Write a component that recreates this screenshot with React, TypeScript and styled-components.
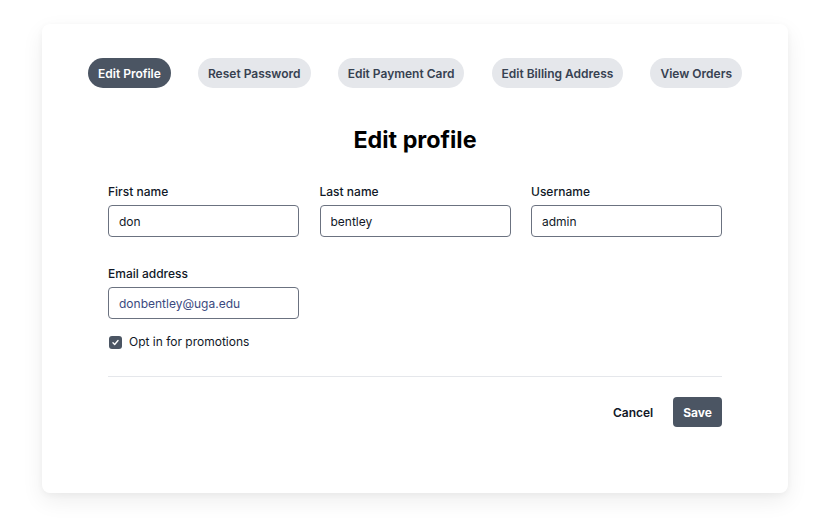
import React, { useState } from 'react';
import styled, { createGlobalStyle } from 'styled-components';

const GlobalStyle = createGlobalStyle`
  body {
    margin: 0;
    background: #ffffff;
    font-family: Inter, "Noto Sans", sans-serif;
    color: #111827;
  }
`;

const tabs = ['Edit Profile', 'Reset Password', 'Edit Payment Card', 'Edit Billing Address', 'View Orders'];

export default function App() {
  const [active, setActive] = useState(0);
  const [optIn, setOptIn] = useState(true);

  return (
    <>
      <GlobalStyle />
      <Page>
        <Card>
          <TabRow>
            {tabs.map((t, i) => (
              <Tab key={t} $active={i === active} onClick={() => setActive(i)}>
                {t}
              </Tab>
            ))}
          </TabRow>
          <Title>Edit profile</Title>
          <Form onSubmit={e => e.preventDefault()}>
            <Grid>
              <Field>
                <Label>First name</Label>
                <Input defaultValue="don" />
              </Field>
              <Field>
                <Label>Last name</Label>
                <Input defaultValue="bentley" />
              </Field>
              <Field>
                <Label>Username</Label>
                <Input defaultValue="admin" />
              </Field>
            </Grid>
            <Grid $second>
              <Field>
                <Label>Email address</Label>
                <Input $autofill defaultValue="donbentley@uga.edu" />
              </Field>
            </Grid>
            <CheckRow onClick={() => setOptIn(!optIn)}>
              <CheckBox $checked={optIn}>
                {optIn && (
                  <svg width="9" height="9" viewBox="0 0 16 16" fill="none">
                    <path d="M3.5 8.5l3 3 6-7" stroke="#fff" strokeWidth="2.4" strokeLinecap="round" strokeLinejoin="round" />
                  </svg>
                )}
              </CheckBox>
              <CheckLabel>Opt in for promotions</CheckLabel>
            </CheckRow>
            <Divider />
            <Actions>
              <CancelBtn type="button">Cancel</CancelBtn>
              <SaveBtn type="submit">Save</SaveBtn>
            </Actions>
          </Form>
        </Card>
      </Page>
    </>
  );
}

const Page = styled.div`
  padding: 24px 44px 25px 42px;
`;
const Card = styled.div`
  width: 746px;
  height: 469px;
  box-sizing: border-box;
  padding: 34px 66px 0;
  background: #fff;
  border-radius: 8px;
  box-shadow: 0 8px 22px rgba(0, 0, 0, 0.07), 0 2px 6px rgba(0, 0, 0, 0.04);
`;
const TabRow = styled.div`
  display: flex;
  justify-content: space-between;
  margin: 0 -20px;
`;
const Tab = styled.button<{ $active: boolean }>`
  height: 30px;
  padding: 0 10px;
  border: none;
  border-radius: 15px;
  font-family: Inter, sans-serif;
  font-size: 12px;
  font-weight: 600;
  cursor: pointer;
  color: ${p => (p.$active ? '#ffffff' : '#374151')};
  background-color: ${p => (p.$active ? '#4b5563' : '#e5e7eb')};
`;
const Title = styled.h1`
  margin: 36px 0 0;
  text-align: center;
  font-size: 23.3px;
  line-height: 32px;
  font-weight: 700;
  color: #000;
`;
const Form = styled.form`
  display: flex;
  flex-direction: column;
  margin-top: 28px;
`;
const Grid = styled.div<{ $second?: boolean }>`
  display: grid;
  grid-template-columns: 191px 191px 191px;
  justify-content: space-between;
  margin-top: ${p => (p.$second ? '29px' : '0')};
`;
const Field = styled.div`
  display: flex;
  flex-direction: column;
  gap: 5px;
`;
const Label = styled.label`
  font-size: 12px;
  line-height: 16px;
  font-weight: 500;
  color: #111827;
`;
const Input = styled.input<{ $autofill?: boolean }>`
  height: 32px;
  box-sizing: border-box;
  padding: 0 10px;
  border: 1px solid #6b7280;
  border-radius: 4px;
  font-family: Inter, sans-serif;
  font-size: 12px;
  color: ${p => (p.$autofill ? '#3b4a80' : '#111827')};
  :focus {
    outline: none;
  }
`;
const CheckRow = styled.div`
  display: flex;
  align-items: center;
  gap: 7px;
  margin-top: 15px;
  cursor: pointer;
`;
const CheckBox = styled.span<{ $checked: boolean }>`
  display: flex;
  align-items: center;
  justify-content: center;
  width: 13px;
  height: 13px;
  margin-left: 1px;
  box-sizing: border-box;
  border-radius: 3px;
  background: ${p => (p.$checked ? '#4b5563' : '#fff')};
  border: ${p => (p.$checked ? 'none' : '1px solid #6b7280')};
`;
const CheckLabel = styled.span`
  font-size: 12px;
  line-height: 16px;
  color: #111827;
`;
const Divider = styled.hr`
  margin: 26px 0 0;
  border: none;
  border-top: 1px solid #e5e7eb;
`;
const Actions = styled.div`
  display: flex;
  justify-content: flex-end;
  align-items: center;
  gap: 20px;
  margin-top: 20px;
`;
const CancelBtn = styled.button`
  border: none;
  background: none;
  padding: 0;
  font-family: Inter, sans-serif;
  font-size: 12px;
  font-weight: 600;
  color: #111827;
  cursor: pointer;
`;
const SaveBtn = styled.button`
  height: 30px;
  padding: 0 10px;
  border: none;
  border-radius: 4px;
  font-family: Inter, sans-serif;
  font-size: 12px;
  font-weight: 700;
  color: #fff;
  background-color: #4b5563;
  cursor: pointer;
`;
